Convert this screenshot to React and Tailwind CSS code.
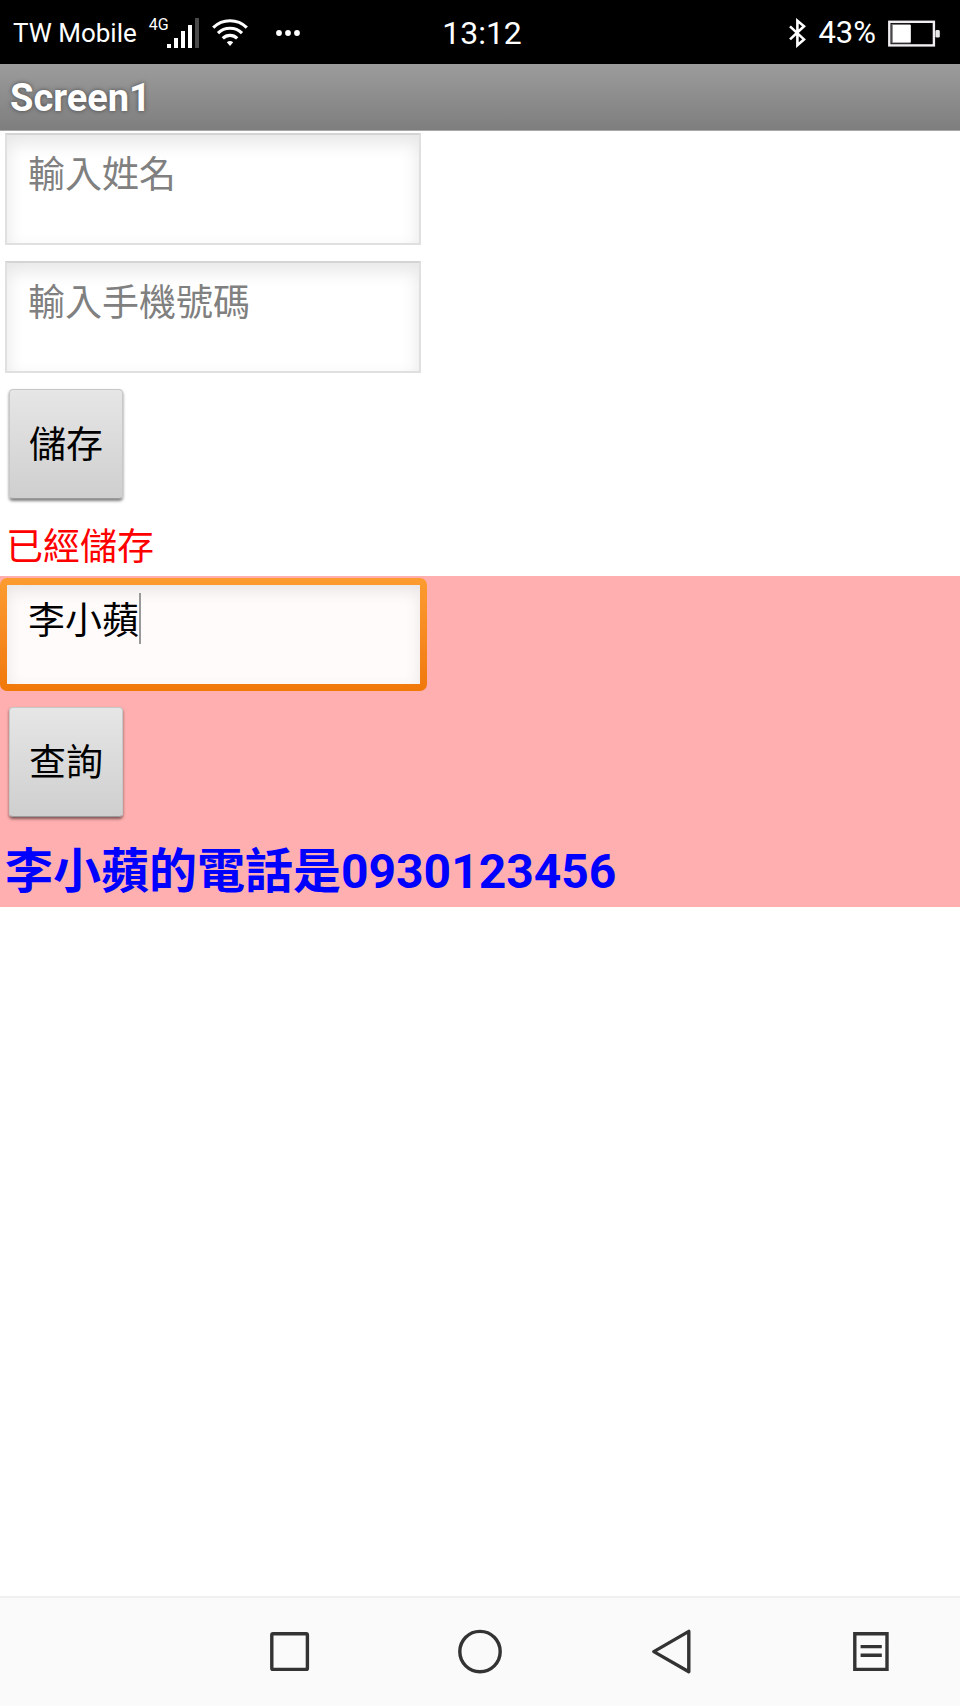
import { useState } from 'react';

// ════════════════════════════════════════════════════════════
// ICONS
// ════════════════════════════════════════════════════════════
const SignalIcon = () => (
  <svg width="33" height="32" viewBox="0 0 33 32" fill="#fff" aria-hidden="true">
    <rect x="0" y="27" width="4" height="4" />
    <rect x="7" y="21" width="4" height="10" />
    <rect x="14" y="14" width="4" height="17" />
    <rect x="21" y="8" width="4" height="23" />
    <rect x="28" y="1" width="4" height="30" fill="#4a4a4a" />
  </svg>
);

const WifiIcon = () => (
  <svg width="36" height="28" viewBox="0 0 36 28" fill="none" stroke="#fff" strokeWidth="3.2" aria-hidden="true">
    <path d="M1.2 8.6A24 24 0 0 1 34.8 8.6" />
    <path d="M6 14.2A17 17 0 0 1 30 14.2" />
    <path d="M10.8 19.4A10.2 10.2 0 0 1 25.2 19.4" />
    <path d="M14.8 23.2Q18 20.6 21.2 23.2L18 27Z" fill="#fff" stroke="none" />
  </svg>
);

const MoreIcon = () => (
  <svg width="24" height="6" viewBox="0 0 24 6" fill="#fff" aria-hidden="true">
    <circle cx="3" cy="3" r="2.9" />
    <circle cx="12" cy="3" r="2.9" />
    <circle cx="21" cy="3" r="2.9" />
  </svg>
);

const BluetoothIcon = () => (
  <svg width="17" height="30" viewBox="0 0 17 30" fill="none" stroke="#fff" strokeWidth="2.6" aria-hidden="true">
    <path d="M1 8.4L15 21.4L8.4 27.2V2.8L15 8.2L1 21.4" />
  </svg>
);

const BatteryIcon = () => (
  <svg width="52" height="27" viewBox="0 0 52 27" aria-hidden="true">
    <rect x="1.3" y="1.8" width="44.6" height="23.6" fill="none" stroke="#f0eef0" strokeWidth="2.4" />
    <rect x="3.4" y="3.8" width="19" height="19.6" fill="#777" />
    <rect x="4.8" y="5" width="18" height="17.4" fill="#fff" />
    <rect x="47.4" y="10" width="4.4" height="7.6" rx="1.4" fill="#e8e8e8" />
  </svg>
);

const NAV_ITEMS = [
  { key: 'recent', label: '最近', shape: <rect x="13.8" y="11.8" width="35.6" height="35.6" rx="1.2" /> },
  { key: 'home',   label: '首頁', shape: <circle cx="30" cy="29.6" r="20.2" /> },
  { key: 'back',   label: '返回', shape: <path d="M11.8 29.6L46.8 9.4V49.8Z" strokeLinejoin="round" /> },
  { key: 'menu',   label: '選單', shape: <path d="M20.8 11.8H53V47.4H20.8ZM26.6 24.6H47.8M26.6 33.2H47.8" /> },
];

// ════════════════════════════════════════════════════════════
// FORM PARTS
// ════════════════════════════════════════════════════════════
const textBoxClass = 'block w-full bg-transparent text-[37px] leading-[54px] text-black outline-none placeholder:text-[#808080]';

const TextBox = ({ label, value, onChange }) => (
  <div className="mx-[5px] h-28 w-[416px] max-w-full border-2 border-[#e0e0e0] border-t-[#d4d4d4] bg-white shadow-[inset_0_8px_18px_rgba(0,0,0,0.1)]">
    <input
      aria-label={label}
      placeholder={label}
      value={value}
      onChange={(e) => onChange(e.target.value)}
      className={`${textBoxClass} px-[21px] pt-[14px] pb-8`}
    />
  </div>
);

const GreyButton = ({ children }) => (
  <button
    type="button"
    className="ml-[9px] h-[110px] rounded-[4px] border border-[#c8c8c8] border-b-[#9a9a9a] bg-linear-to-b from-[#e6e6e6] to-[#cfcfcf] px-[19px] pt-1 text-[37px] leading-[54px] text-black shadow-[0_2px_3px_rgba(0,0,0,0.5)]"
  >
    {children}
  </button>
);

// ════════════════════════════════════════════════════════════
// SCREEN
// ════════════════════════════════════════════════════════════
export default function App() {
  const [name, setName]   = useState('');
  const [phone, setPhone] = useState('');
  const [query, setQuery] = useState('李小蘋');

  return (
    <div className="flex min-h-screen flex-col bg-white font-[Roboto,'Noto_Sans_CJK_TC',sans-serif]">
      <header>
        <div className="grid h-16 grid-cols-[1fr_auto_1fr] items-center bg-black pt-[2px] text-white">
          <div className="flex items-center pl-[13px]">
            <span className="text-[26px] leading-8">TW Mobile</span>
            <span className="ml-3 self-start text-[16px] leading-4">4G</span>
            <span className="-ml-[2px]"><SignalIcon /></span>
            <span className="ml-3"><WifiIcon /></span>
            <span className="ml-7"><MoreIcon /></span>
          </div>
          <span className="pl-1 text-[32px] leading-9">13:12</span>
          <div className="flex items-center justify-end pr-5">
            <BluetoothIcon />
            <span className="mx-3 text-[31px] leading-9">43%</span>
            <BatteryIcon />
          </div>
        </div>
        <div className="flex h-[67px] items-center border-b border-[#a8a8a8] bg-linear-to-b from-[#9c9c9c] to-[#7e7e7e] px-[10px] pt-[2px]">
          <h1 className="text-[38px] leading-[44px] font-bold text-white [text-shadow:0_0_4px_rgba(0,0,0,0.5)]">Screen1</h1>
        </div>
      </header>

      <main className="flex-1">
        <section className="flex flex-col items-start gap-4 pt-[2px]">
          <TextBox label="輸入姓名" value={name} onChange={setName} />
          <TextBox label="輸入手機號碼" value={phone} onChange={setPhone} />
          <GreyButton>儲存</GreyButton>
          <p className="px-[6px] pt-[6px] pb-px text-[37px] leading-[54px] text-[#ff0000]">已經儲存</p>
        </section>

        <section className="flex flex-col items-start bg-[#ffafaf] pt-[2px]">
          <div className="w-[427px] max-w-full rounded-[7px] bg-linear-to-b from-[#fc9c30] to-[#f07808] p-[7px]">
            <div className="relative h-[99px] bg-[#fffbfb] shadow-[inset_0_6px_16px_rgba(0,0,0,0.09)]">
              <input
                aria-label="查詢姓名"
                value={query}
                onChange={(e) => setQuery(e.target.value)}
                className={`${textBoxClass} px-[21px] pt-[10px] pb-8 caret-transparent`}
              />
              <span className="absolute top-2 left-[132px] h-[51px] w-[2px] bg-[#999]" />
            </div>
          </div>
          <div className="pt-4">
            <GreyButton>查詢</GreyButton>
          </div>
          <p className="px-[5px] pt-[21px] pb-px text-[48px] leading-[68px] font-bold text-[#0000ff]">李小蘋的電話是0930123456</p>
        </section>
      </main>

      <nav className="grid h-[110px] grid-cols-5 items-center border-t-2 border-[#f0f0f0] bg-[#fafafa]">
        <span />
        {NAV_ITEMS.map((item) => (
          <button key={item.key} type="button" aria-label={item.label} className="flex justify-center">
            <svg width="60" height="60" viewBox="0 0 60 60" fill="none" stroke="#333" strokeWidth="3.4">
              {item.shape}
            </svg>
          </button>
        ))}
      </nav>
    </div>
  );
}
